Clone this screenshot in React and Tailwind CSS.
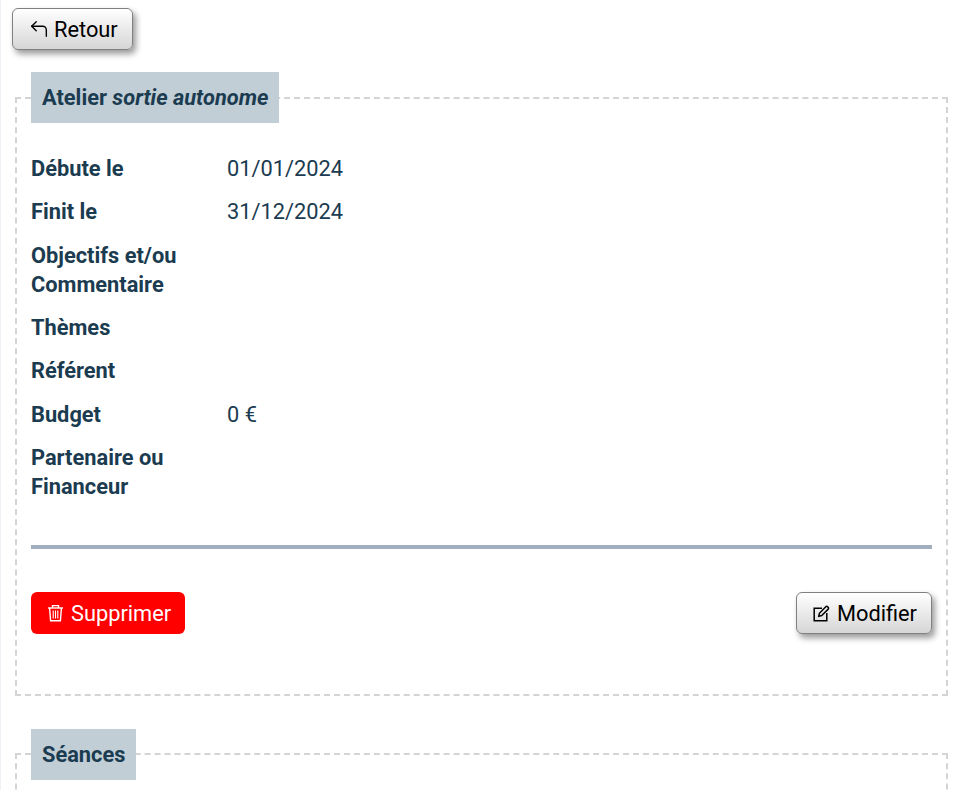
import { CornerUpLeft } from 'lucide-react';

const rows = [
    { label: 'Débute le', value: '01/01/2024' },
    { label: 'Finit le', value: '31/12/2024' },
    { label: 'Objectifs et/ou Commentaire', value: '' },
    { label: 'Thèmes', value: '' },
    { label: 'Référent', value: '' },
    { label: 'Budget', value: '0 €' },
    { label: 'Partenaire ou Financeur', value: '' },
];

function TrashIcon() {
    return (
        <svg width="17" height="18" viewBox="0 0 17 18" fill="none" stroke="currentColor" strokeWidth="1.4">
            <path d="M1 4h15" />
            <path d="M5.5 4V1.6h6V4" />
            <path d="M2.6 4l1 12.8h9.8l1-12.8" />
            <path d="M6.2 6.5v8M8.5 6.5v8M10.8 6.5v8" strokeWidth="1.1" />
        </svg>
    );
}

function EditIcon() {
    return (
        <svg width="17" height="17" viewBox="0 0 17 17" fill="none" stroke="currentColor" strokeWidth="1.5">
            <path d="M9 3.2H1.2v12.6h12.6V8" />
            <path d="M5.8 11.2l.6-2.9 6.4-6.6a1.2 1.2 0 0 1 1.7 0l.7.7a1.2 1.2 0 0 1 0 1.7l-6.5 6.5z" />
        </svg>
    );
}

function GreyButton({ icon, className, children }) {
    return (
        <button
            type="button"
            className={`flex h-[42px] items-center rounded-md border border-[#808080] bg-gradient-to-b from-white to-[#d6d6d6] pr-[14px] text-black shadow-[3px_4px_6px_rgba(0,0,0,0.4)] ${className}`}
        >
            {icon}
            {children}
        </button>
    );
}

function Section({ title, children }) {
    return (
        <fieldset className="ml-[15px] mr-[10px] min-w-0 border-2 border-dashed border-[#d4d4d4] px-[14px]">
            <legend className="bg-[#c1ced6] px-[11px] py-[11px] text-[21.8px] font-bold leading-[29px]">{title}</legend>
            {children}
        </fieldset>
    );
}

export default function App() {
    return (
        <div className="relative h-[790px] overflow-hidden border-l border-[#eef2f6] bg-white font-['Roboto',sans-serif] text-[21.8px] leading-[29px] text-[#1b3b50]">
            {/* bit of the side menu that sticks out */}
            <div className="absolute left-[-1px] top-[228px] h-[80px] w-px bg-[#c1d3e0]" />
            <div className="ml-[11px] flex pt-2">
                <GreyButton className="gap-[4px] pl-[15px]" icon={<CornerUpLeft size={22} strokeWidth={1.5} />}>Retour</GreyButton>
            </div>

            <div className="mt-[22px] ml-[-1px]">
                <Section title={<>Atelier <em>sortie autonome</em></>}>
                    <div className="pt-[23.6px]">
                        {rows.map((row) => (
                            <div key={row.label} className="flex py-[7.2px]">
                                <div className="w-[196px] shrink-0 pr-4 font-bold">{row.label}</div>
                                <div>{row.value}</div>
                            </div>
                        ))}
                    </div>
                    <hr className="mt-[36.4px] border-t-4 border-[#a0aebd]" />
                    <div className="mt-[43.3px] mb-[59.7px] flex items-center justify-between">
                        <button type="button" className="flex h-[42px] items-center gap-[7px] rounded-md bg-[#ff0000] pl-[16px] pr-[14px] pt-px text-white">
                            <TrashIcon />
                            Supprimer
                        </button>
                        <GreyButton className="gap-[7px] pl-[16px] pt-px" icon={<EditIcon />}>Modifier</GreyButton>
                    </div>
                </Section>
                <div className="mt-[33px]">
                    <Section title="Séances">
                        <div className="h-[200px]" />
                    </Section>
                </div>
            </div>
        </div>
    );
}
